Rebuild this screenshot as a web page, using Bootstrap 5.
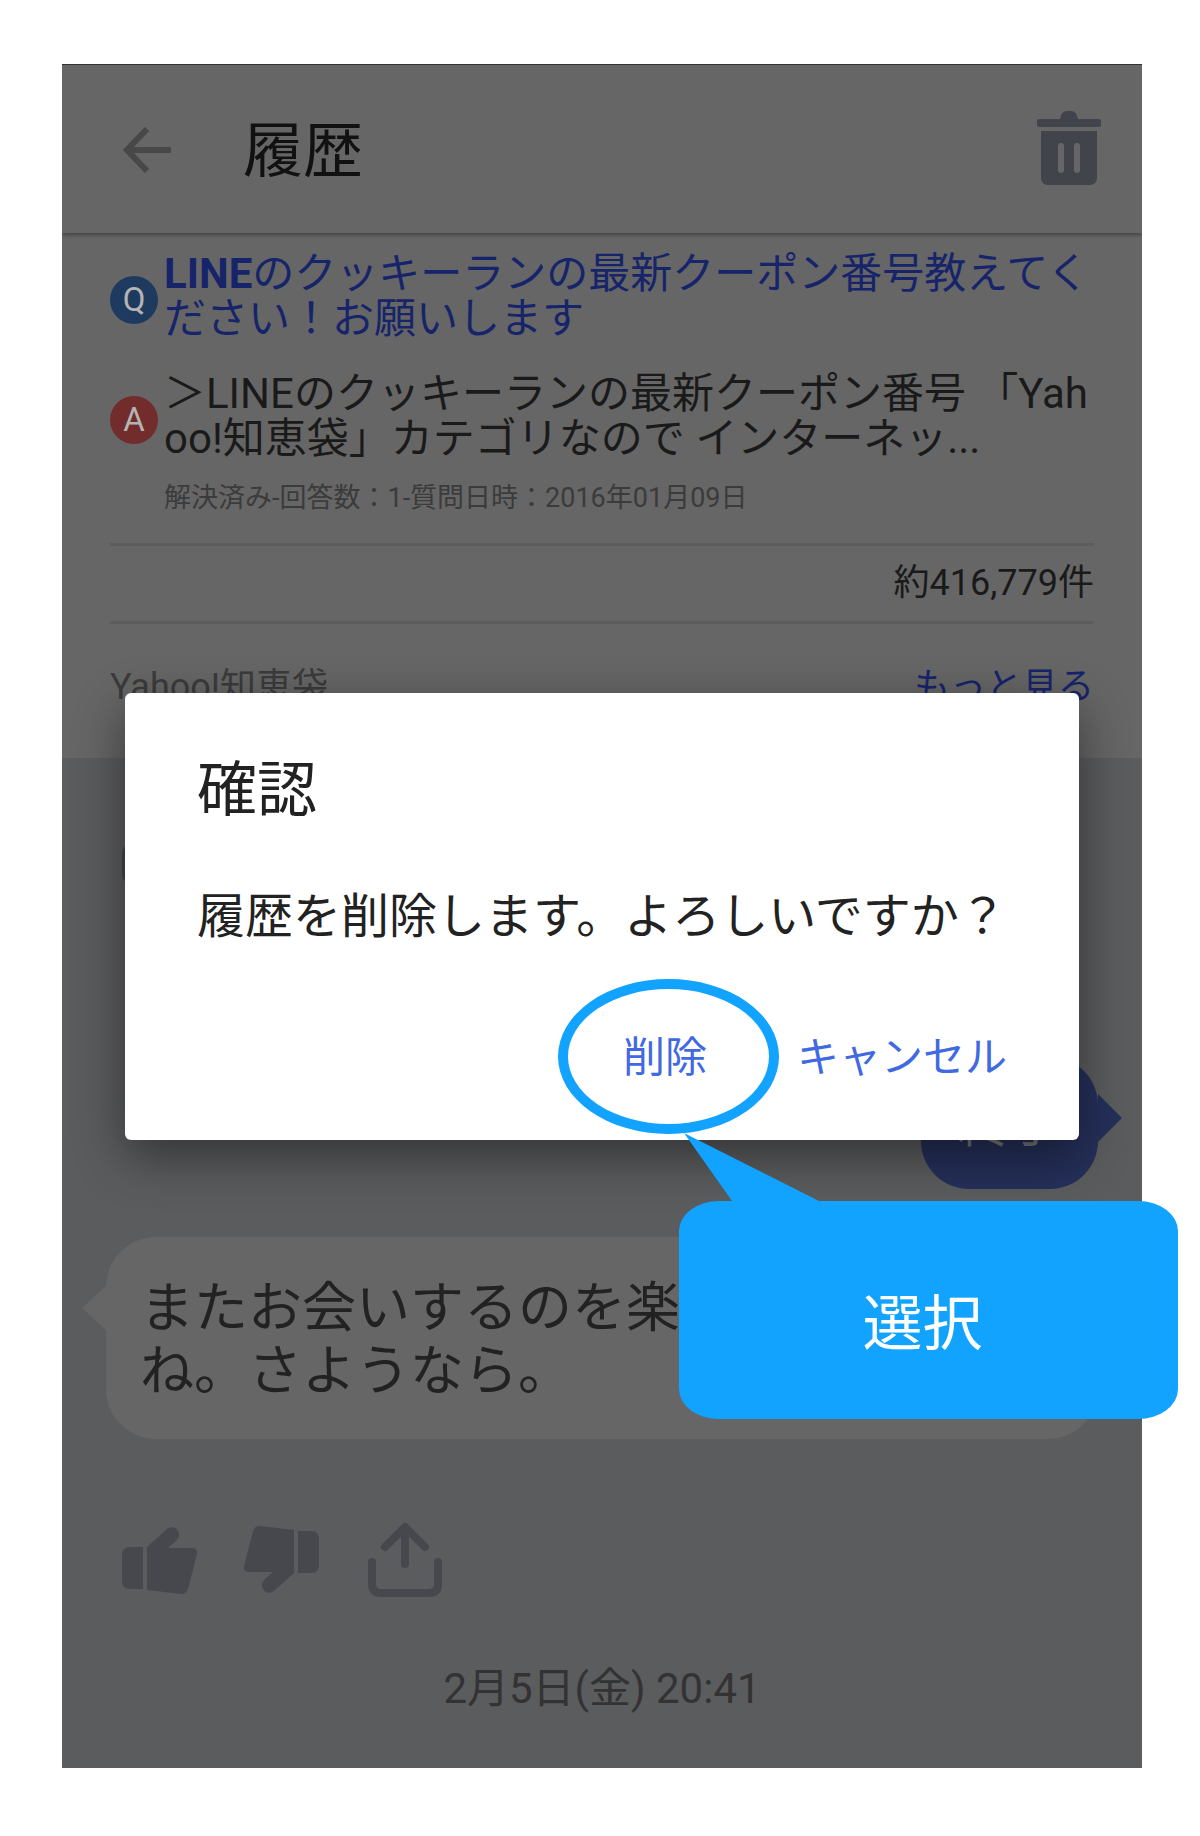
<!DOCTYPE html>
<html lang="ja">
<head>
    <meta charset="UTF-8">
    <meta name="viewport" content="width=device-width, initial-scale=1">
    <link href="https://cdn.jsdelivr.net/npm/bootstrap@5.3.2/dist/css/bootstrap.min.css" rel="stylesheet">
    <script src="https://cdn.jsdelivr.net/npm/bootstrap@5.3.2/dist/js/bootstrap.bundle.min.js"></script>
    <title>履歴</title>
    <style>
        body { background: #fff; font-family: Roboto, "Noto Sans CJK JP", sans-serif; }
        .stage { width: 1200px; height: 1836px; padding: 64px 58px 0 62px; position: relative; overflow: hidden; }
        .phone { height: 1704px; background: #5b5c5e; border-top: 1px solid #333; overflow: hidden; }
        .top-part { height: 693px; background: #666; }
        .app-head { height: 168px; padding: 2px 41px 0 61px; box-shadow: 0 2px 4px rgba(0,0,0,.35); }
        .app-head h1 { font-size: 60px; font-weight: 400; color: #111; margin: 4px 0 0 70px; line-height: 1; }
        .trash-btn { margin: -4px 0 0 auto; }
        .qa-list { padding: 18px 48px 0 48px; }
        .qa-row { font-size: 42px; line-height: 45px; }
        .qa-badge { width: 48px; height: 48px; flex: none; border-radius: 50%; color: #b4b4b4; font-size: 33px; line-height: 48px; text-align: center; margin: 8px 6px 0 0; }
        .q-badge { background: #1e3a5f; }
        .a-badge { background: #732c2c; }
        .q-text { color: #17246a; word-break: break-all; }
        .q-text b { font-weight: 700; }
        .a-text { color: #1a1a1a; word-break: break-all; }
        .answer-row { margin-top: 30px; }
        .qa-meta { font-size: 27px; color: #3b3b3b; margin: 19px 0 0 54px; line-height: 36px; }
        .rule-line { border-top: 3px solid #5c5c5f; }
        .rule-first { margin-top: 27px; }
        .count-row { font-size: 36px; line-height: 74px; height: 75px; color: #1a1a1a; text-align: right; }
        .src-row { font-size: 36px; line-height: 50px; color: #3b3b3b; padding-top: 38px; }
        .more-link { color: #17246a; }
        .talk-part { padding: 87px 44px 0 44px; }
        .side-tab { width: 20px; height: 38px; margin-left: 16px; background: #44454e; border-radius: 8px 0 0 8px; }
        .bubble-me { position: relative; width: 177px; height: 132px; margin: 174px 0 0 auto; padding-top: 4px; background: #25305a; border-radius: 48px; color: #777; font-size: 52px; }
        .bubble-me::after { content: ""; position: absolute; right: -24px; top: 37px; border-left: 24px solid #25305a; border-top: 24px solid transparent; border-bottom: 24px solid transparent; }
        .bubble-ai { position: relative; height: 202px; margin-top: 48px; background: #666; border-radius: 50px; padding: 40px 36px 0 34px; font-size: 54px; line-height: 63px; color: #222; }
        .bubble-ai::before { content: ""; position: absolute; left: -24px; top: 49px; border-right: 24px solid #666; border-top: 22px solid transparent; border-bottom: 22px solid transparent; }
        .act-icons { padding: 83px 0 0 15px; gap: 47px; }
        .time-text { font-size: 42px; color: #333; text-align: center; margin-top: 66px; line-height: 50px; }
        .dlg { position: absolute; left: 125px; top: 693px; width: 954px; height: 447px; background: #fff; border-radius: 6px; box-shadow: 0 16px 50px rgba(0,0,0,.45); padding: 66px 72px 0 72px; }
        .dlg-title { font-size: 60px; line-height: 64px; color: #222; font-weight: 400; margin: 0; }
        .dlg-body { font-size: 48px; line-height: 60px; color: #222; margin: 64px 0 0 0; white-space: nowrap; }
        .dlg-actions { position: absolute; right: 72px; bottom: 56px; gap: 90px; font-size: 42px; line-height: 52px; color: #4169e1; }
        .hl-ring { position: absolute; left: 558px; top: 979px; width: 221px; height: 155px; border: 10px solid #12a2ff; border-radius: 50%; }
        .callout { position: absolute; left: 679px; top: 1201px; width: 499px; height: 218px; padding: 30px 12px 0 0; background: #12a2ff; border-radius: 40px / 30px; color: #fff; font-size: 60px; }
        .callout-tail { position: absolute; left: 679px; top: 1128px; }
    </style>
</head>
<body>
<div class="stage">
    <div class="phone">
        <div class="top-part">
            <div class="app-head d-flex align-items-center">
                <svg width="50" height="48" viewBox="0 0 50 48" fill="none" stroke="#484848" stroke-width="6"><path d="M48 24H5M24 3 4 24l20 21"/></svg>
                <h1>履歴</h1>
                <svg class="trash-btn" width="64" height="76" viewBox="0 0 64 76" fill="#42444c"><path d="M23 9c1-5 3-8 7-8h4c4 0 6 3 7 8h20a3.500 3.500 0 0 1 0 8H3a3.500 3.500 0 0 1 0-8z"/><path fill-rule="evenodd" d="M4 21h56v47c0 4-3 7-7 7H11c-4 0-7-3-7-7zm20 12a3 3 0 0 0-3 3v24a3 3 0 0 0 6 0V36a3 3 0 0 0-3-3zm16 0a3 3 0 0 0-3 3v24a3 3 0 0 0 6 0V36a3 3 0 0 0-3-3z"/></svg>
            </div>
            <div class="qa-list">
                <div class="qa-row d-flex align-items-center">
                    <span class="qa-badge q-badge">Q</span>
                    <span class="q-text"><b>LINE</b>のクッキーランの最新クーポン番号教えてください！お願いします</span>
                </div>
                <div class="qa-row answer-row d-flex align-items-center">
                    <span class="qa-badge a-badge">A</span>
                    <span class="a-text">＞LINEのクッキーランの最新クーポン番号 「Yahoo!知恵袋」カテゴリなので インターネッ...</span>
                </div>
                <div class="qa-meta">解決済み-回答数：1-質問日時：2016年01月09日</div>
                <div class="rule-line rule-first"></div>
                <div class="count-row">約416,779件</div>
                <div class="rule-line"></div>
                <div class="src-row d-flex justify-content-between">
                    <span>Yahoo!知恵袋</span>
                    <span class="more-link">もっと見る</span>
                </div>
            </div>
        </div>
        <div class="talk-part">
            <div class="side-tab"></div>
            <div class="bubble-me d-flex align-items-center justify-content-center">終了</div>
            <div class="bubble-ai">またお会いするのを楽しみにしてますね。さようなら。</div>
            <div class="act-icons d-flex align-items-center">
                <svg width="76" height="70" viewBox="0 0 76 70" fill="#47484e"><path d="M22 22H9c-5 0-8 3-8 8v26c0 5 3 8 8 8h13z"/><path d="M26 22 46 4c4-3 9-2 11 2s1 7-2 10l-8 7h24c4 0 6 3 5 6l-9 35c-1 3-3 5-7 5l-34-4z"/></svg>
                <svg width="76" height="70" viewBox="0 0 76 70" fill="#47484e"><path d="M54 48h13c5 0 8-3 8-8V14c0-5-3-8-8-8H54z"/><path d="M50 48 30 66c-4 3-9 2-11-2s-1-7 2-10l8-7H5c-4 0-6-3-5-6L9 6c1-3 3-5 7-5l34 4z"/></svg>
                <svg width="76" height="76" viewBox="0 0 76 76" fill="none" stroke="#47484e" stroke-width="8" stroke-linecap="round" stroke-linejoin="round"><path d="M38 6v36M18 25 38 5l20 20M5 40v22c0 6 3 9 9 9h48c6 0 9-3 9-9V40"/></svg>
            </div>
            <div class="time-text">2月5日(金) 20:41</div>
        </div>
    </div>

    <div class="dlg">
        <h2 class="dlg-title">確認</h2>
        <p class="dlg-body">履歴を削除します。よろしいですか？</p>
        <div class="dlg-actions d-flex">
            <span>削除</span>
            <span>キャンセル</span>
        </div>
    </div>
    <div class="hl-ring"></div>
    <svg class="callout-tail" width="150" height="80" viewBox="0 0 150 80" fill="#12a2ff"><path d="M5 5 53 73v5h87v-5z"/></svg>
    <div class="callout d-flex align-items-center justify-content-center">選択</div>
</div>
</body>
</html>
